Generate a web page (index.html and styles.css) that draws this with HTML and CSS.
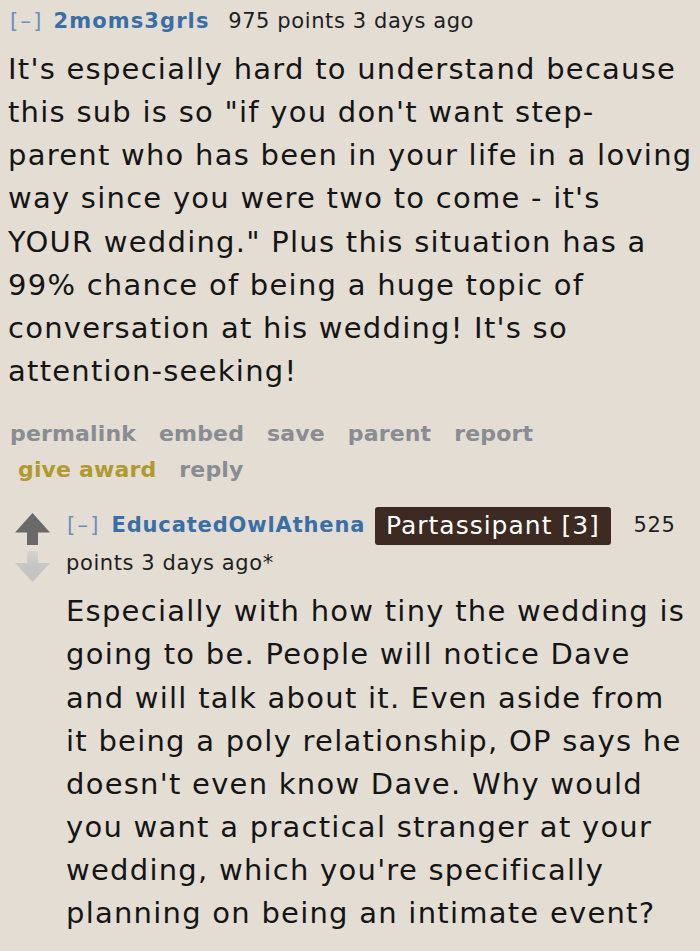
FILE: index.html
```html
<!DOCTYPE html>
<html>
<head>
<meta charset="utf-8">
<link rel="stylesheet" href="styles.css">
</head>
<body>
<div class="comment">
  <div class="tagline">
    <span class="expand">[–]</span>
    <span class="author">2moms3grls</span>
    <span class="meta">975 points 3 days ago</span>
  </div>
  <div class="md">
    <p>It's especially hard to understand because<br>this sub is so "if you don't want step-<br>parent who has been in your life in a loving<br>way since you were two to come - it's<br>YOUR wedding." Plus this situation has a<br>99% chance of being a huge topic of<br>conversation at his wedding! It's so<br>attention-seeking!</p>
  </div>
  <ul class="buttons">
    <li>permalink</li>
    <li>embed</li>
    <li>save</li>
    <li>parent</li>
    <li>report</li>
  </ul>
  <ul class="buttons buttons-second">
    <li class="award">give award</li>
    <li>reply</li>
  </ul>
  <div class="child">
    <div class="midcol">
      <svg class="arrow" width="35" height="32" viewBox="0 0 35 32"><path d="M17.5 0 L35 19.5 L23 19.5 L23 32 L12 32 L12 19.5 L0 19.5 Z" fill="#696969"/></svg>
      <svg class="arrow" width="35" height="31" viewBox="0 0 35 31">
        <defs><linearGradient id="dg" x1="0" y1="0" x2="0" y2="1"><stop offset="0" stop-color="#d6d4d1"/><stop offset="0.45" stop-color="#c6c6c6"/><stop offset="1" stop-color="#c2c2c2"/></linearGradient></defs>
        <path d="M12 0 L23 0 L23 12 L35 12 L17.5 31 L0 12 L12 12 Z" fill="url(#dg)"/>
      </svg>
    </div>
    <div class="entry">
      <div class="tagline tagline2">
        <span class="expand">[–]</span>
        <span class="author">EducatedOwlAthena</span>
        <span class="flair">Partassipant [3]</span>
        <span class="meta">525</span>
        <span class="meta when">points 3 days ago*</span>
      </div>
      <div class="md">
        <p>Especially with how tiny the wedding is<br>going to be. People will notice Dave<br>and will talk about it. Even aside from<br>it being a poly relationship, OP says he<br>doesn't even know Dave. Why would<br>you want a practical stranger at your<br>wedding, which you're specifically<br>planning on being an intimate event?</p>
      </div>
    </div>
  </div>
</div>
</body>
</html>
```
FILE: styles.css
```css
html, body {
  background: #e3ddd4;
}
body {
  margin: 0;
  padding: 7px 8px 0 8px;
  font-family: "DejaVu Sans", Verdana, sans-serif;
  color: #151515;
}
.tagline {
  font-size: 21px;
  line-height: 28px;
  color: #1e1e1e;
}
.meta {
  letter-spacing: 0.6px;
}
.when {
  display: inline-block;
}
.expand {
  color: #6b90bb;
  margin-left: 2px;
  letter-spacing: 2.3px;
}
.author {
  color: #3a6ea6;
  font-weight: bold;
  letter-spacing: 1.1px;
  margin-left: 3px;
  margin-right: 12px;
}
.md p {
  margin: 13px 0 0 0;
  font-size: 29px;
  line-height: 43.15px;
  letter-spacing: 1.25px;
  white-space: nowrap;
}
.buttons {
  list-style: none;
  margin: 23px 0 0 0;
  padding: 0 0 0 2px;
  display: flex;
  column-gap: 23px;
  font-size: 22px;
  line-height: 36px;
  font-weight: bold;
  color: #898c92;
}
.buttons li {
  letter-spacing: 0.15px;
}
.buttons-second {
  margin-top: 0;
  padding-left: 10px;
}
.buttons .award {
  color: #b09a2f;
}
.child {
  display: flex;
  margin-top: 19px;
}
.midcol {
  width: 58px;
  flex: none;
  display: flex;
  flex-direction: column;
  align-items: flex-start;
  padding-left: 7px;
  box-sizing: border-box;
  padding-top: 6px;
  gap: 6px;
}
.arrow {
  display: block;
}
.entry {
  flex: 1;
  min-width: 0;
}
.tagline2 {
  line-height: 37px;
}
.tagline2 .expand {
  margin-left: 1px;
}
.tagline2 .author {
  margin-left: 4px;
  margin-right: 0;
  letter-spacing: 0.85px;
}
.flair {
  display: inline-block;
  background: #3d2a22;
  color: #fff;
  font-size: 25px;
  line-height: 38px;
  letter-spacing: 1px;
  padding: 0 11px;
  border-radius: 3px;
  margin: 0 16px 0 3px;
  vertical-align: top;
}
.entry .md p {
  margin-top: 8px;
}
```
